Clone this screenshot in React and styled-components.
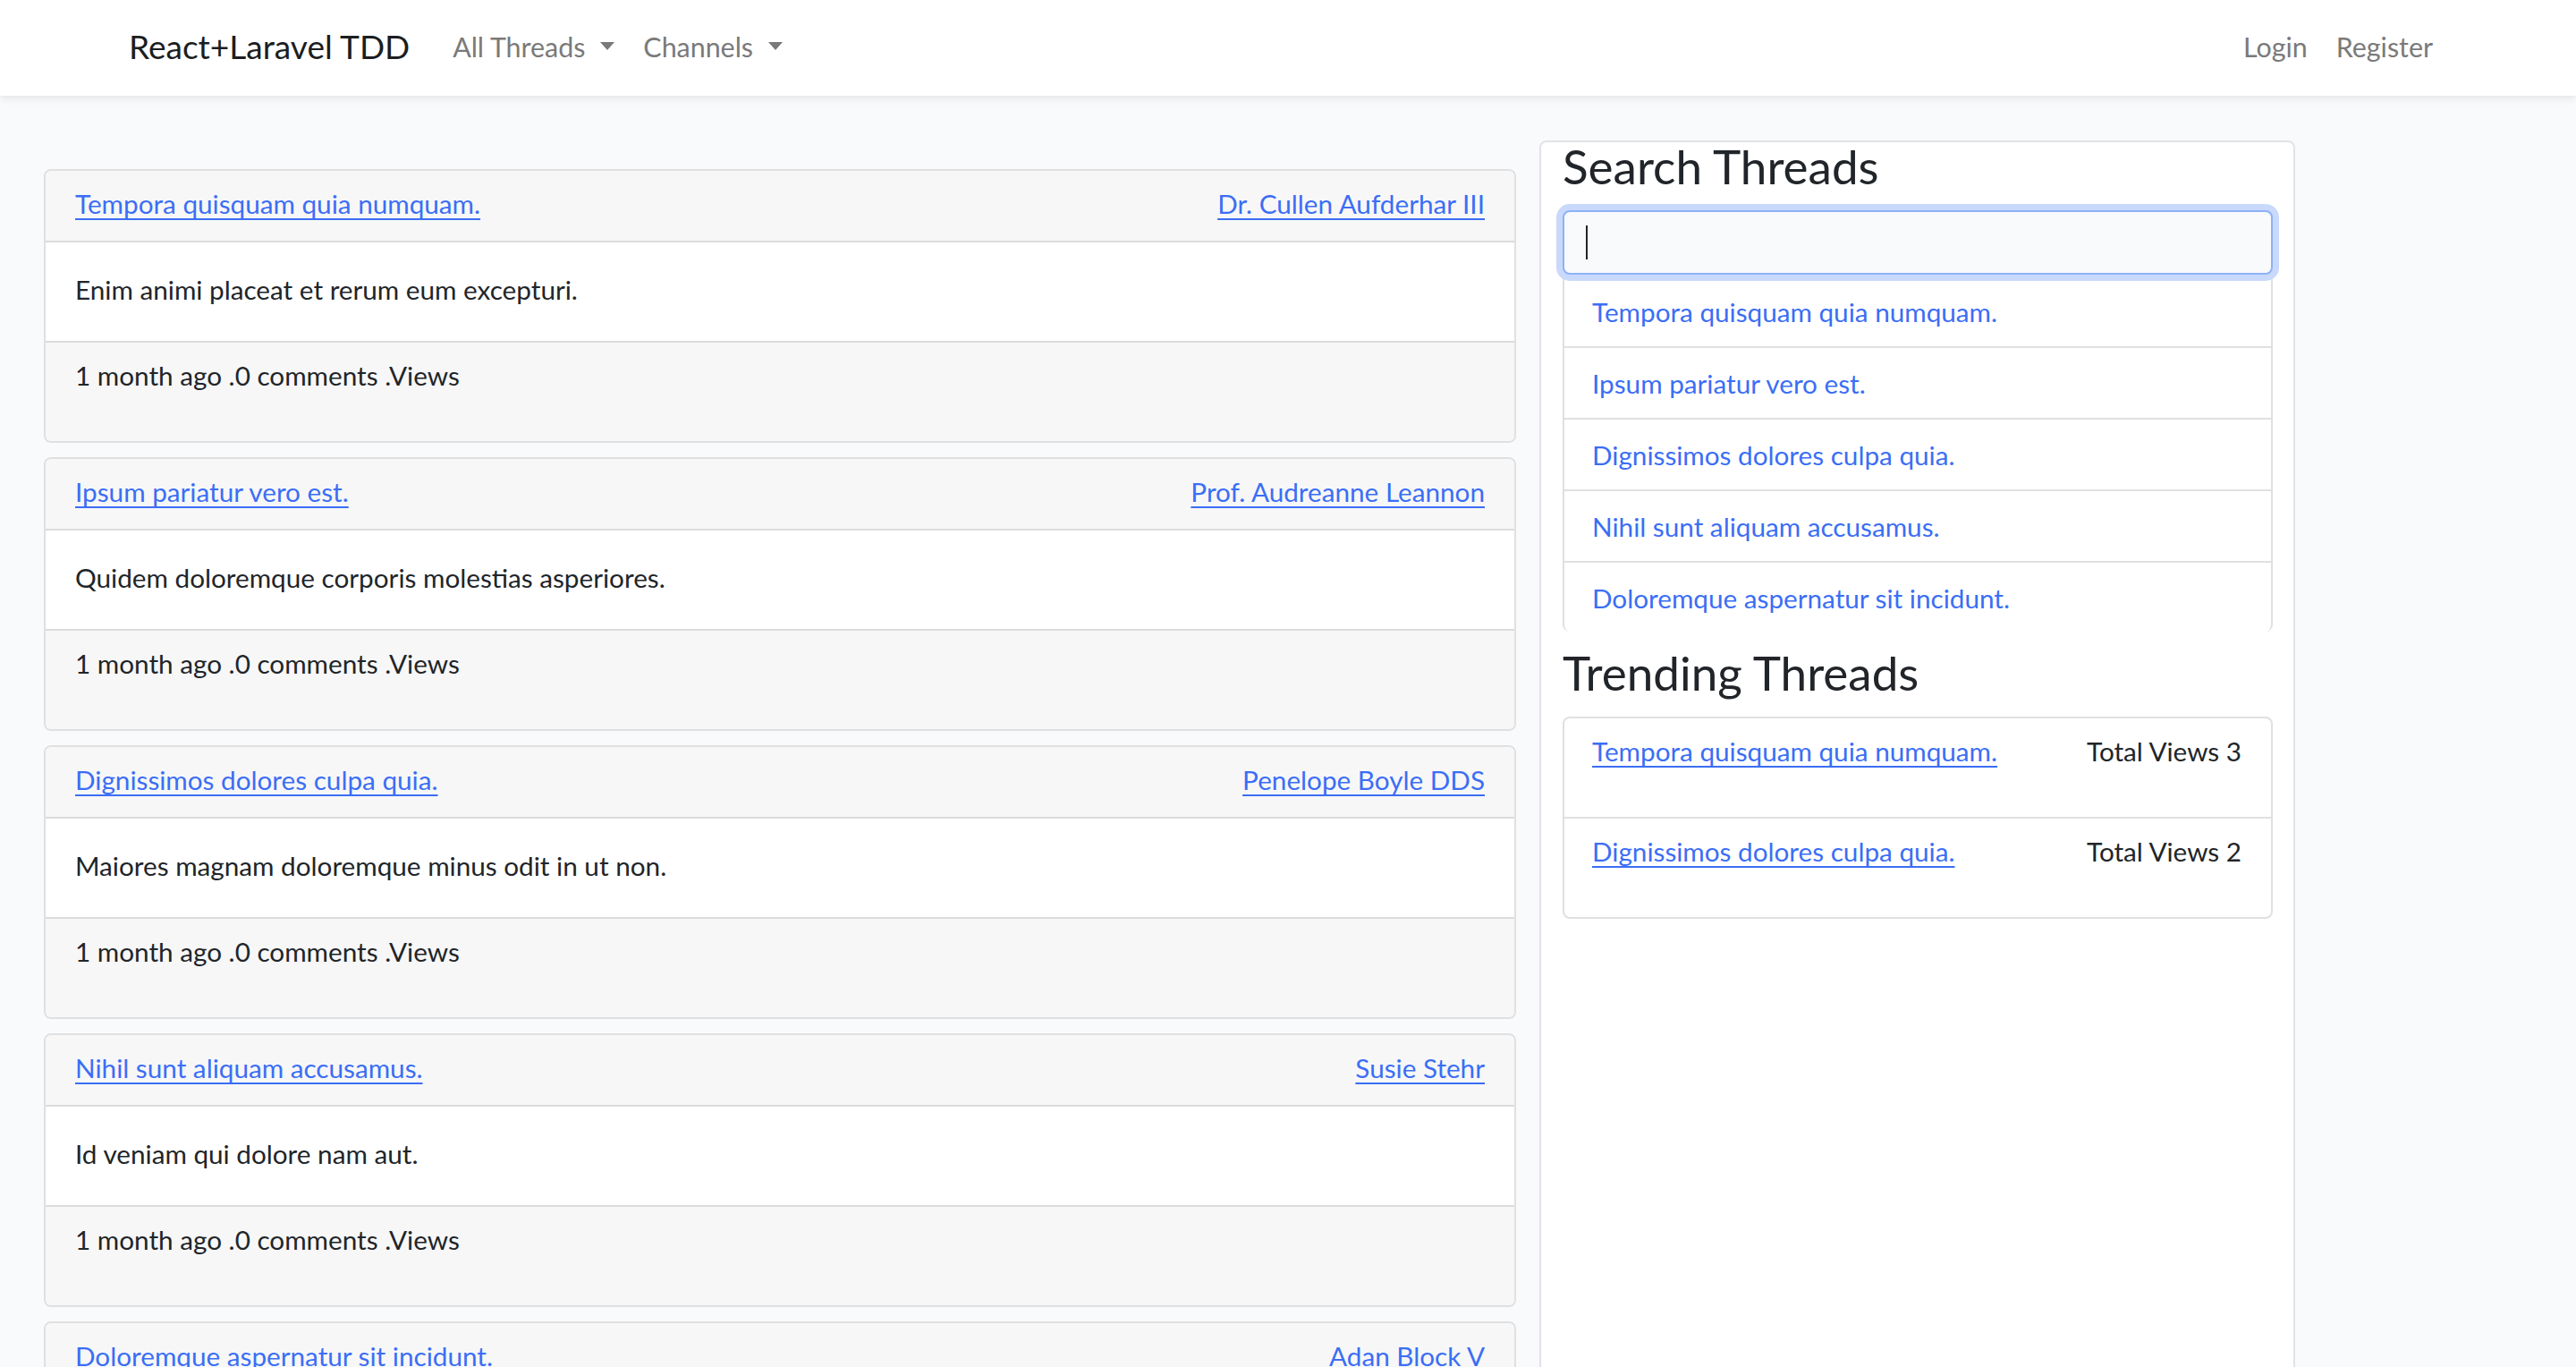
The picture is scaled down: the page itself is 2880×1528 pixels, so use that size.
import React from "react";
import styled, { createGlobalStyle } from "styled-components";

const threads = [
  {
    title: "Tempora quisquam quia numquam.",
    author: "Dr. Cullen Aufderhar III",
    body: "Enim animi placeat et rerum eum excepturi."
  },
  {
    title: "Ipsum pariatur vero est.",
    author: "Prof. Audreanne Leannon",
    body: "Quidem doloremque corporis molestias asperiores."
  },
  {
    title: "Dignissimos dolores culpa quia.",
    author: "Penelope Boyle DDS",
    body: "Maiores magnam doloremque minus odit in ut non."
  },
  {
    title: "Nihil sunt aliquam accusamus.",
    author: "Susie Stehr",
    body: "Id veniam qui dolore nam aut."
  },
  {
    title: "Doloremque aspernatur sit incidunt.",
    author: "Adan Block V",
    body: "Voluptas at quia dolorem ut."
  }
];

const trending = [
  { title: "Tempora quisquam quia numquam.", views: 3 },
  { title: "Dignissimos dolores culpa quia.", views: 2 }
];

const App = () => {
  return (
    <>
      <GlobalStyle />
      <Navbar>
        <NavLeft>
          <Brand href="#">React+Laravel TDD</Brand>
          <NavLink href="#">
            All Threads <Caret />
          </NavLink>
          <NavLink href="#">
            Channels <Caret />
          </NavLink>
        </NavLeft>
        <NavRight>
          <NavLink href="#">Login</NavLink>
          <NavLink href="#">Register</NavLink>
        </NavRight>
      </Navbar>

      <Main>
        <ThreadColumn>
          {threads.map(thread => (
            <Card key={thread.title}>
              <CardHeader>
                <Link href="#">{thread.title}</Link>
                <Link href="#">{thread.author}</Link>
              </CardHeader>
              <CardBody>{thread.body}</CardBody>
              <CardFooter>1 month ago .0 comments .Views</CardFooter>
            </Card>
          ))}
        </ThreadColumn>

        <SidePanel>
          <PanelTitle>Search Threads</PanelTitle>
          <SearchWrap>
            <SearchInput type="text" />
            <TextCursor />
          </SearchWrap>
          <Suggestions>
            {threads.map(thread => (
              <Suggestion key={thread.title} href="#">
                {thread.title}
              </Suggestion>
            ))}
          </Suggestions>

          <PanelTitle>Trending Threads</PanelTitle>
          <TrendingCard>
            {trending.map(item => (
              <TrendingRow key={item.title}>
                <Link href="#">{item.title}</Link>
                <span>Total Views {item.views}</span>
              </TrendingRow>
            ))}
          </TrendingCard>
        </SidePanel>
      </Main>
    </>
  );
};

const GlobalStyle = createGlobalStyle`
  * {
    box-sizing: border-box;
  }

  body {
    margin: 0;
    background: #f8fafc;
    font-family: Lato, "Open Sans", sans-serif;
    font-size: 29.7px;
    line-height: 46px;
    color: #212529;
  }
`;

const Navbar = styled.nav`
  height: 107px;
  padding: 0 144px 4px;
  display: flex;
  align-items: center;
  justify-content: space-between;
  background: #fff;
  box-shadow: 0 4px 8px rgba(0, 0, 0, 0.075);
  position: relative;
  z-index: 1;
`;

const NavLeft = styled.div`
  display: flex;
  align-items: center;
`;

const NavRight = styled.div`
  display: flex;
  align-items: center;
`;

const Brand = styled.a`
  font-size: 37px;
  color: #1b1e21;
  text-decoration: none;
  margin-right: 32px;
`;

const NavLink = styled.a`
  display: flex;
  align-items: center;
  padding: 0 16px;
  font-size: 30.4px;
  color: #7a7a7a;
  text-decoration: none;
`;

const Caret = styled.span`
  display: inline-block;
  margin-left: 17px;
  width: 0;
  height: 0;
  border-top: 9px solid #7a7a7a;
  border-left: 8px solid transparent;
  border-right: 8px solid transparent;
`;

const Main = styled.main`
  display: flex;
  align-items: flex-start;
  gap: 26px;
  padding: 50px 0 0 49px;
`;

const ThreadColumn = styled.div`
  width: 1646px;
  margin-top: 32px;
  display: flex;
  flex-direction: column;
  gap: 16px;
`;

const Card = styled.div`
  border: 2px solid #dfe0e1;
  border-radius: 8px;
  overflow: hidden;
  background: #fff;
`;

const CardHeader = styled.div`
  display: flex;
  justify-content: space-between;
  padding: 14px 33px 18px;
  background: #f7f7f7;
  border-bottom: 2px solid #dcdcdc;
`;

const CardBody = styled.div`
  padding: 30px 33px 34px;
  background: #fff;
`;

const CardFooter = styled.div`
  padding: 14px 33px 50px;
  background: #f7f7f7;
  border-top: 2px solid #dcdcdc;
`;

const Link = styled.a`
  color: #3b6ef5;
  text-decoration: underline;
  text-underline-offset: 5px;
  text-decoration-thickness: 2px;
`;

const SidePanel = styled.aside`
  width: 845px;
  min-height: 1500px;
  padding: 0 23px 0 24px;
  background: #fff;
  border: 2px solid #e2e3e4;
  border-radius: 8px;
`;

const PanelTitle = styled.h4`
  margin: 0 0 23px;
  font-size: 53px;
  font-weight: 400;
  line-height: 53px;
  color: #212529;
`;

const SearchWrap = styled.div`
  position: relative;
  margin-top: 20px;
`;

const SearchInput = styled.input`
  display: block;
  width: 100%;
  height: 72px;
  padding: 0 24px;
  font: inherit;
  color: #212529;
  caret-color: transparent;
  background: #f8fafc;
  border: 2px solid #8db2f7;
  border-radius: 8px;
  box-shadow: 0 0 0 7px #c9d9fb;
  outline: none;
`;

const TextCursor = styled.span`
  position: absolute;
  left: 26px;
  top: 17px;
  width: 2px;
  height: 38px;
  background: #212529;
`;

const Suggestions = styled.div`
  height: 399px;
  overflow: hidden;
  margin-bottom: 19px;
  padding-top: 2px;
  border-left: 2px solid #dfe0e1;
  border-right: 2px solid #dfe0e1;
  border-radius: 0 0 8px 8px;
`;

const Suggestion = styled.a`
  display: block;
  padding: 17px 31px 15px;
  border-bottom: 2px solid #dfe0e1;
  color: #3b6ef5;
  text-decoration: none;
`;

const TrendingCard = styled.div`
  border: 2px solid #dfe0e1;
  border-radius: 8px;
`;

const TrendingRow = styled.div`
  display: flex;
  justify-content: space-between;
  padding: 14px 33px 50px 31px;

  & + & {
    border-top: 2px solid #dfe0e1;
  }
`;

export default App;
